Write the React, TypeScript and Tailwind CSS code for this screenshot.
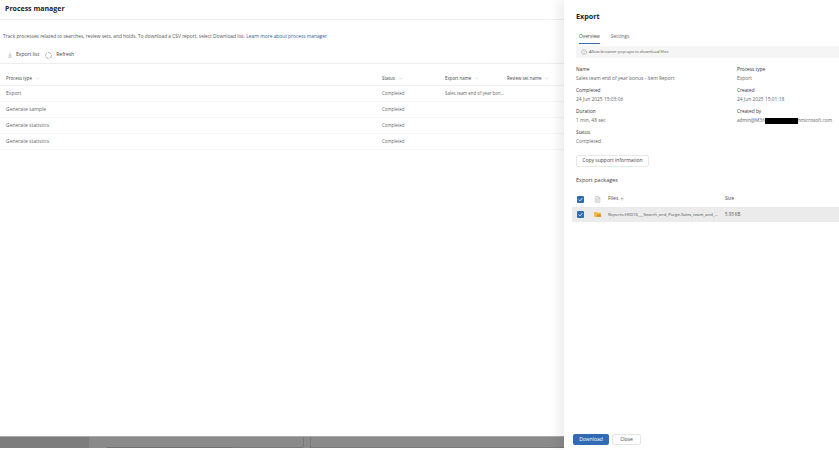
import { ArrowDownToLine, ArrowUp, ChevronDown, FileText, Info } from "lucide-react";

const rows = [
  { type: "Export", status: "Completed", name: "Sales team end of year bon..." },
  { type: "Generate sample", status: "Completed", name: "" },
  { type: "Generate statistics", status: "Completed", name: "" },
  { type: "Generate statistics", status: "Completed", name: "" },
];

function HeaderCell({ label, className }: { label: string; className: string }) {
  return (
    <div className={`flex items-center gap-[3px] text-[4.4px] font-medium text-[#444] ${className}`}>
      {label}
      <ChevronDown className="h-[5px] w-[5px] text-[#888]" strokeWidth={1.2} />
    </div>
  );
}

function Field({ label, value }: { label: string; value: React.ReactNode }) {
  return (
    <div className="h-[21px] pt-[1px]">
      <div className="h-[9px] text-[4.8px] leading-[9px] font-medium text-[#333]">{label}</div>
      <div className="h-[9px] text-[4.9px] leading-[9px] text-[#666]">{value}</div>
    </div>
  );
}

function Check() {
  return (
    <span className="flex h-[7px] w-[7px] items-center justify-center rounded-[1px] bg-[#2f6cb3]">
      <svg viewBox="0 0 8 8" className="h-[5px] w-[5px]" fill="none" stroke="white" strokeWidth="1.3">
        <path d="M1 4.2 3.1 6.2 7 1.8" />
      </svg>
    </span>
  );
}

export default function App() {
  return (
    <div className="flex h-[450px] w-[839px] overflow-hidden bg-white font-['Open_Sans','Noto_Sans',sans-serif] text-[5px] text-[#555]">
      <div className="flex w-[564px] flex-col">
        <div className="h-[20px] border-b border-[#f0f0f0] pl-[5px] pt-[3px] text-[7px] leading-[12px] font-bold text-[#222]">
          Process manager
        </div>
        <p className="mt-[13px] h-[7px] pl-[3px] text-[4.84px] leading-[7px] whitespace-nowrap text-[#555]">
          Track processes related to searches, review sets, and holds. To download a CSV report, select Download list.{" "}
          <span className="text-[#2f6496]">Learn more about process manager</span>
        </p>
        <div className="mt-[7px] flex h-[17px] items-center border-b border-[#eee] pl-[7px] text-[#444]">
          <ArrowDownToLine className="h-[6px] w-[6px] text-[#666]" strokeWidth={1.2} />
          <span className="ml-[3px] font-medium">Export list</span>
          <svg viewBox="0 0 14 14" className="ml-[6px] h-[7px] w-[7px]" fill="none" stroke="#666" strokeWidth="1">
            <circle cx="7" cy="7" r="6" strokeDasharray="7 2" />
          </svg>
          <span className="ml-[4px] font-medium">Refresh</span>
        </div>
        <div className="mt-[8px] flex h-[14px] items-center border-b border-[#f0f0f0] pl-[6px]">
          <HeaderCell label="Process type" className="w-[376px]" />
          <HeaderCell label="Status" className="w-[63px]" />
          <HeaderCell label="Export name" className="w-[62px]" />
          <HeaderCell label="Review set name" className="w-[57px]" />
        </div>
        {rows.map((row, i) => (
          <div key={i} className="flex h-[16px] items-center border-b border-[#f6f6f6] pl-[6px] text-[#666]">
            <div className="w-[376px]">{row.type}</div>
            <div className="w-[63px] text-[4.4px]">{row.status}</div>
            <div className="text-[4.4px]">{row.name}</div>
          </div>
        ))}
        <div className="mt-auto mb-[2px] flex h-[12px] border-t border-[#aaa] bg-[#8a8a8a]">
          <div className="w-[89px] bg-[#7d7d7d]" />
          <div className="ml-[18px] w-[125px] border-b border-[#707070]" />
          <div className="w-[72px] rounded-b-[2px] border-r border-b border-[#777]" />
          <div className="ml-[6px] flex-1 border-b border-l border-[#777]" />
        </div>
      </div>

      <div className="relative flex w-[275px] flex-col bg-white shadow-[-6px_0_10px_rgba(0,0,0,0.07)]">
        <div className="pt-[11px] pl-[12px] text-[7.2px] leading-[11px] font-bold text-[#222]">Export</div>
        <div className="mt-[10px] flex h-[14px] pl-[15px] leading-[9px]">
          <div className="h-[12px] border-b border-[#2f6cb3] text-[4.8px] font-medium text-[#444]">Overview</div>
          <div className="ml-[11px] text-[#666]">Settings</div>
        </div>
        <div className="ml-[12px] flex h-[12px] items-center bg-[#f5f5f5] pl-[5px] text-[#555]">
          <Info className="h-[6px] w-[6px] text-[#666]" strokeWidth={1.2} />
          <span className="ml-[2px] text-[4.2px]">Allow browser pop-ups to download files</span>
        </div>

        <div className="mt-[6px] grid grid-cols-[161px_1fr] pl-[12px]">
          <Field label="Name" value="Sales team end of year bonus - Item Report" />
          <Field label="Process type" value="Export" />
          <Field label="Completed" value="24 Jun 2025 15:03:06" />
          <Field label="Created" value="24 Jun 2025 15:01:18" />
          <Field label="Duration" value="1 min, 48 sec" />
          <Field
            label="Created by"
            value={
              <span className="flex items-center text-[4.7px]">
                admin@M36
                <span className="h-[6px] w-[33px] bg-black" />
                nmicrosoft.com
              </span>
            }
          />
          <Field label="Status" value="Completed" />
        </div>

        <div className="mt-[7px] ml-[12px] flex h-[12px] w-[73px] items-center justify-center rounded-[2px] border border-[#e8e8e8] font-medium text-[#444]">
          Copy support information
        </div>
        <div className="mt-[9px] ml-[12px] h-[9px] text-[5.5px] leading-[9px] font-medium text-[#444]">Export packages</div>

        <div className="mt-[6px] flex h-[16px] items-center pl-[13px]">
          <Check />
          <FileText className="ml-[10px] h-[7px] w-[7px] text-[#666]" strokeWidth={1} />
          <div className="ml-[7px] flex w-[117px] items-center gap-[2px] font-medium text-[#444]">
            Files
            <ArrowUp className="h-[4px] w-[4px]" />
          </div>
          <div className="font-medium text-[#444]">Size</div>
        </div>
        <div className="ml-[8px] flex h-[15px] items-center bg-[#ebebeb] pl-[5px] text-[#555]">
          <Check />
          <svg viewBox="0 0 8 6" className="ml-[10px] h-[5px] w-[7px]">
            <path d="M0 0h3l1 1h4v5H0z" fill="#f4b63f" />
            <path d="M3.500 3h4.500v3H3.500z" fill="#d9902a" />
          </svg>
          <div className="ml-[7px] w-[117px] text-[4.25px] whitespace-nowrap">Reports-HK016___Search_and_Purge-Sales_team_and_...</div>
          <div className="text-[4.4px]">5.93 KB</div>
        </div>

        <div className="mt-auto mb-[5px] ml-[9px] flex gap-[3px]">
          <div className="flex h-[11px] w-[36px] items-center justify-center rounded-[2px] bg-[#2f6cb3] font-medium text-white">
            Download
          </div>
          <div className="flex h-[11px] w-[29px] items-center justify-center rounded-[2px] border border-[#e5e5e5] font-medium text-[#444]">
            Close
          </div>
        </div>
      </div>
    </div>
  );
}
